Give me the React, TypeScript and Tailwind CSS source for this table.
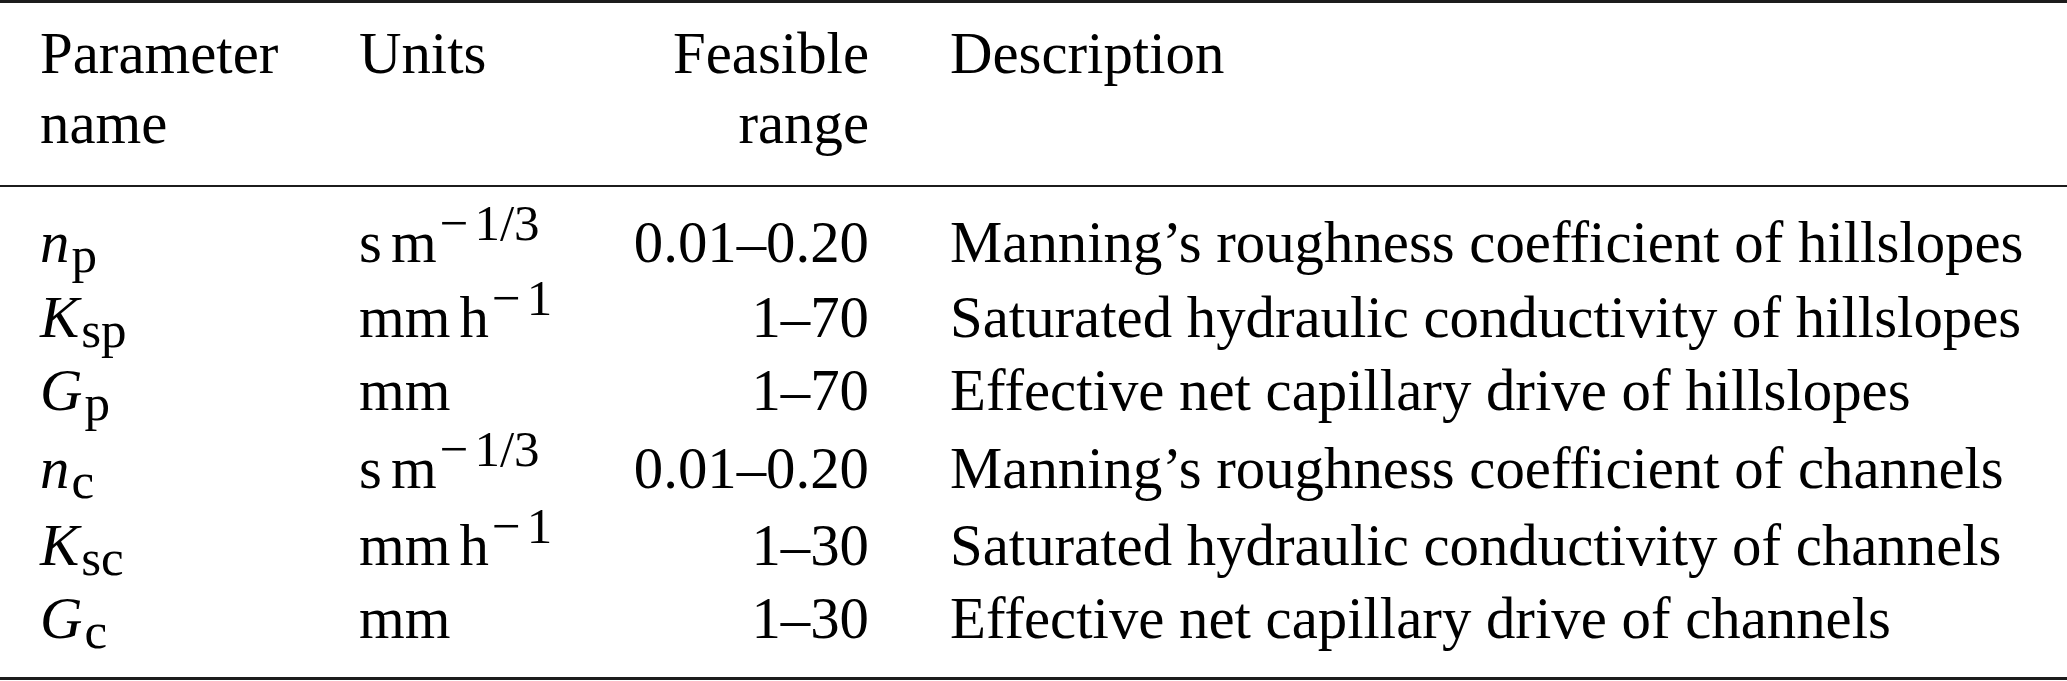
import React from "react";

const Sub = ({ children }: { children: React.ReactNode }) => (
  <span className="align-[-10px] text-[51px] leading-[0] ml-[2px]">{children}</span>
);

const Sup = ({ children }: { children: React.ReactNode }) => (
  <span className="align-[22px] text-[51px] leading-[0] ml-[3px]">
    <span className="mr-[6px]">−</span>
    {children}
  </span>
);

type Row = {
  sym: React.ReactNode;
  unit: React.ReactNode;
  range: string;
  desc: string;
  h: string;
};

const smUnit = (
  <>
    s<span className="ml-[9px]">m</span>
    <Sup>1/3</Sup>
  </>
);

const mmhUnit = (
  <>
    mm<span className="ml-[9px]">h</span>
    <Sup>1</Sup>
  </>
);

const rows: Row[] = [
  {
    sym: (
      <>
        <i>n</i>
        <Sub>p</Sub>
      </>
    ),
    unit: smUnit,
    range: "0.01–0.20",
    desc: "Manning’s roughness coefficient of hillslopes",
    h: "h-[75px]",
  },
  {
    sym: (
      <>
        <i>K</i>
        <Sub>sp</Sub>
      </>
    ),
    unit: mmhUnit,
    range: "1–70",
    desc: "Saturated hydraulic conductivity of hillslopes",
    h: "h-[73px]",
  },
  {
    sym: (
      <>
        <i>G</i>
        <Sub>p</Sub>
      </>
    ),
    unit: <>mm</>,
    range: "1–70",
    desc: "Effective net capillary drive of hillslopes",
    h: "h-[78px]",
  },
  {
    sym: (
      <>
        <i>n</i>
        <Sub>c</Sub>
      </>
    ),
    unit: smUnit,
    range: "0.01–0.20",
    desc: "Manning’s roughness coefficient of channels",
    h: "h-[77px]",
  },
  {
    sym: (
      <>
        <i>K</i>
        <Sub>sc</Sub>
      </>
    ),
    unit: mmhUnit,
    range: "1–30",
    desc: "Saturated hydraulic conductivity of channels",
    h: "h-[73px]",
  },
  {
    sym: (
      <>
        <i>G</i>
        <Sub>c</Sub>
      </>
    ),
    unit: <>mm</>,
    range: "1–30",
    desc: "Effective net capillary drive of channels",
    h: "h-[75px]",
  },
];

export default function App() {
  return (
    <div className="w-[2067px] h-[681px] bg-white text-black font-['Liberation_Serif','Times_New_Roman',serif] text-[58.8px] overflow-hidden">
      <div className="h-[3px] bg-[#1c1c1c]" />
      <div className="pt-[16px] pb-[26px] pl-[40px] grid grid-cols-[319px_200px_310px_1fr] leading-[70px]">
        <div>
          Parameter
          <br />
          name
        </div>
        <div>Units</div>
        <div className="text-right">
          Feasible
          <br />
          range
        </div>
        <div className="pl-[81px]">Description</div>
      </div>
      <div className="h-[2px] bg-[#1c1c1c]" />
      <div className="pt-[17.5px] pb-[21px]">
        {rows.map((r, i) => (
          <div
            key={i}
            className={`pl-[40px] grid grid-cols-[319px_200px_310px_1fr] leading-[75px] whitespace-nowrap ${r.h}`}
          >
            <div>{r.sym}</div>
            <div>{r.unit}</div>
            <div className="text-right">{r.range}</div>
            <div className="pl-[81px]">{r.desc}</div>
          </div>
        ))}
      </div>
      <div className="h-[3px] bg-[#1c1c1c]" />
    </div>
  );
}
